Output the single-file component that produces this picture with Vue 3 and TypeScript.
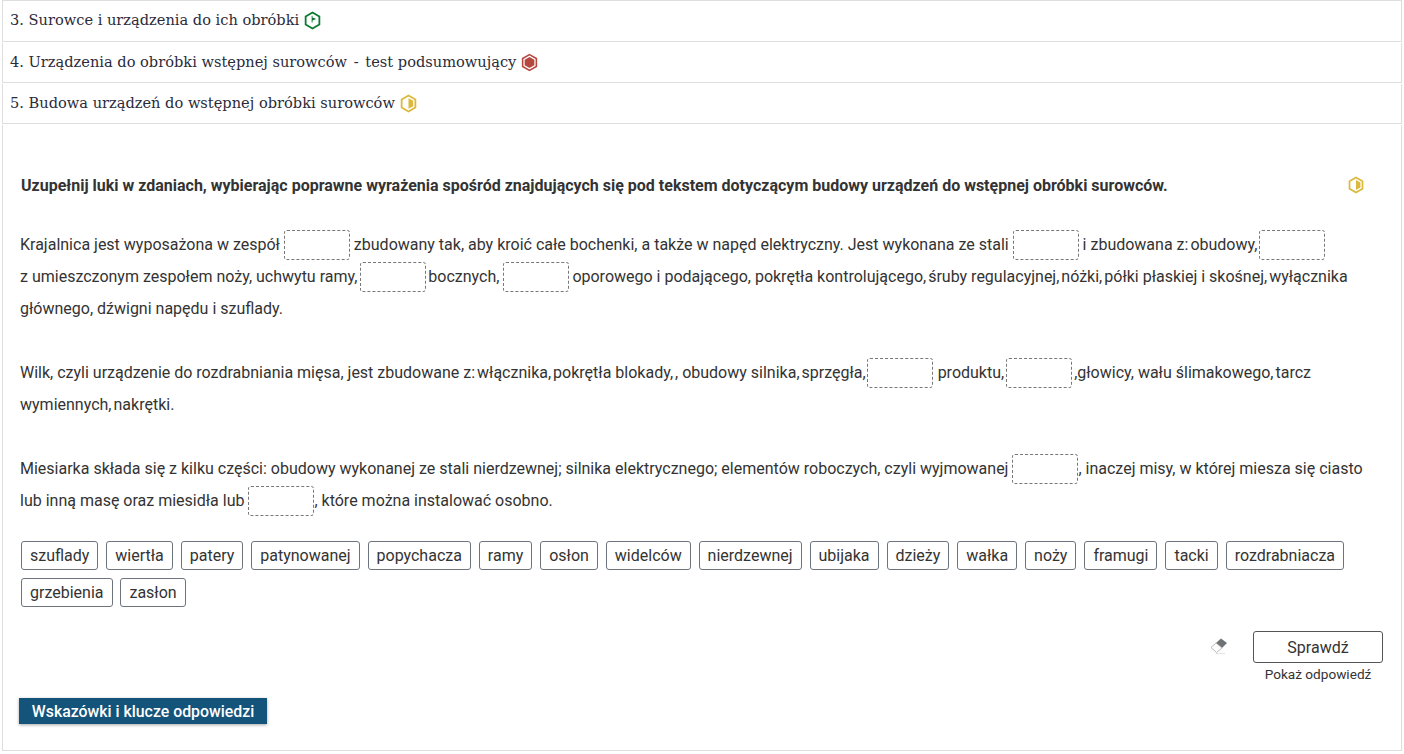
<script setup lang="ts">
const chips: string[] = ['szuflady','wiertła','patery','patynowanej','popychacza','ramy','osłon','widelców','nierdzewnej','ubijaka','dzieży','wałka','noży','framugi','tacki','rozdrabniacza','grzebienia','zasłon']
</script>

<template>
  <div class="page">
    <div class="row first"><span class="name">3. Surowce i urządzenia do ich obróbki</span>
      <svg class="hex" viewBox="0 0 18 18"><path d="M9 1.5 15.5 5.2V12.8L9 16.5 2.5 12.8V5.2Z" fill="#fff" stroke="#0a7a2f" stroke-width="1.7"/><path d="M8.2 4.6H9V6.2L12.6 7.6 9 9V11H8.2Z" fill="#0a7a2f"/></svg>
    </div>
    <div class="row"><span class="name">4. Urządzenia do obróbki wstępnej surowców <span class="dash">-</span> test podsumowujący</span>
      <svg class="hex" viewBox="0 0 18 18"><path d="M9 1.5 15.5 5.2V12.8L9 16.5 2.5 12.8V5.2Z" fill="#fff" stroke="#b5473f" stroke-width="1.5"/><path d="M9 3.8 13.6 6.4V11.6L9 14.2 4.4 11.6V6.4Z" fill="#b5473f"/></svg>
    </div>
    <div class="row"><span class="name">5. Budowa urządzeń do wstępnej obróbki surowców</span>
      <svg class="hex" viewBox="0 0 18 18"><path d="M9 1.5 15.5 5.2V12.8L9 16.5 2.5 12.8V5.2Z" fill="#fff" stroke="#dcb83c" stroke-width="1.7"/><path d="M9 4 13.4 6.5V11.5L9 14Z" fill="#dcb83c"/></svg>
    </div>
    <div class="panel">
      <div class="title">
        <strong>Uzupełnij luki w zdaniach, wybierając poprawne wyrażenia spośród znajdujących się pod tekstem dotyczącym budowy urządzeń do wstępnej obróbki surowców.</strong>
        <svg class="hex big" viewBox="0 0 18 18"><path d="M9 1.5 15.5 5.2V12.8L9 16.5 2.5 12.8V5.2Z" fill="#fff" stroke="#dcb83c" stroke-width="1.7"/><path d="M9 4 13.4 6.5V11.5L9 14Z" fill="#dcb83c"/></svg>
      </div>
      <p class="para">Krajalnica jest wyposażona w zespół <span class="gap"></span> zbudowany tak, aby kroić całe bochenki, a także w napęd elektryczny. Jest wykonana ze stali <span class="gap"></span> i zbudowana z:<i class="s"></i>obudowy,<span class="gap m2"></span> z&nbsp;umieszczonym zespołem noży, uchwytu ramy,<span class="gap m3"></span> bocznych,<span class="gap m4"></span> oporowego i podającego, pokrętła kontrolującego,<i class="s"></i>śruby regulacyjnej,<i class="s"></i>nóżki,<i class="s"></i>półki płaskiej i skośnej,<i class="s"></i>wyłącznika głównego, dźwigni napędu i szuflady.</p>
      <p class="para">Wilk, czyli urządzenie do rozdrabniania mięsa, jest zbudowane z:<i class="s"></i>włącznika,<i class="s"></i>pokrętła blokady,<i class="s"></i>, obudowy silnika,<i class="s"></i>sprzęgła,<span class="gap m1"></span> produktu,<span class="gap m5"></span>,głowicy, wału ślimakowego,<i class="s"></i>tarcz wymiennych,<i class="s"></i>nakrętki.</p>
      <p class="para">Miesiarka składa się z kilku części: obudowy wykonanej ze stali nierdzewnej; silnika elektrycznego; elementów roboczych, czyli wyjmowanej <span class="gap"></span>, inaczej misy, w której miesza się ciasto lub inną masę oraz miesidła lub <span class="gap"></span>, które można instalować osobno.</p>
      <div class="chips">
        <span v-for="c in chips" :key="c" class="chip">{{ c }}</span>
      </div>
      <div class="actions">
        <svg class="eraser" viewBox="0 0 18 16"><path d="M11 .5 17 5 12 10 6 5Z" fill="#6f7275"/><path d="M6 5 12 10 6.5 14.5 1 9.5Z" fill="#fff" stroke="#b4b0ae" stroke-width=".9"/><path d="M6 15.5H15" stroke="#e2e2e2" stroke-width="1"/></svg>
        <div class="check">
          <button class="btn" type="button">Sprawdź</button>
          <span class="show">Pokaż odpowiedź</span>
        </div>
      </div>
      <button class="hints" type="button">Wskazówki i klucze odpowiedzi</button>
    </div>
  </div>
</template>

<style>
html, body { margin: 0; background: #fff; }
</style>

<style scoped>
.page { width: 1400px; margin-left: 2px; height: 751px; box-sizing: border-box; font-family: Roboto, sans-serif; color: #333; display: flex; flex-direction: column; }
.row { height: 40px; flex: none; box-sizing: border-box; border: 1px solid #dedede; border-top: 0; margin-bottom: 1px; padding: 0 7px; display: flex; align-items: center; gap: 4px; font-family: "DejaVu Serif", serif; font-size: 14.6px; color: #2b2b3a; white-space: nowrap; }
.row.first { height: 42px; border-top: 1px solid #dedede; padding-bottom: 1px; }
.name { margin-bottom: 2px; }
.dash { margin: 0 2px; }
.hex { width: 19px; height: 19px; flex: none; }
.panel { flex: 1; border: 1px solid #dedede; border-top: 0; padding: 44px 18px 0 18px; display: flex; flex-direction: column; min-height: 0; }
.title { display: flex; justify-content: space-between; align-items: center; padding-right: 18px; height: 32px; font-size: 16px; }
.title strong { font-weight: 700; color: #333; }
.hex.big { width: 18px; height: 18px; }
.para { margin: 28px 0 0 -1px; font-size: 16px; line-height: 32px; color: #333; }
.para + .para { margin-top: 32px; }
.s { display: inline-block; width: 2px; }
.gap { display: inline-block; width: 66px; height: 30px; box-sizing: border-box; border: 1px dashed #777; border-radius: 3px; vertical-align: middle; margin-top: -2px; }
.gap.m1 { margin-left: 1px; margin-right: 1px; }
.gap.m2 { margin-left: 2px; }
.gap.m3 { margin-left: 3px; margin-right: -2px; }
.gap.m4 { margin-left: 4px; margin-right: -1px; }
.gap.m5 { margin-left: 2px; margin-right: 2px; }
.chips { display: flex; flex-wrap: wrap; gap: 8px 7.95px; margin: 24px 0 0 0; }
.chip { height: 29px; box-sizing: border-box; border: 1px solid #6c757d; border-radius: 3px; padding: 0 8px; font-size: 16px; line-height: 27px; color: #333; }
.actions { display: flex; justify-content: flex-end; align-items: flex-start; gap: 25px; margin-top: 24px; }
.eraser { width: 18px; height: 16px; margin-top: 7px; }
.check { display: flex; flex-direction: column; align-items: center; width: 130px; }
.btn { width: 130px; height: 32px; background: #fff; border: 1px solid #555; border-radius: 3px; font: 400 16px Roboto, sans-serif; color: #333; padding: 0; }
.show { font-size: 13.6px; line-height: 16px; margin-top: 3px; color: #333; white-space: nowrap; }
.hints { align-self: flex-start; width: 248px; height: 26px; margin: 16px 0 0 -2px; background: #14537a; color: #fff; border: 0; padding: 0; font: 500 15.85px Roboto, sans-serif; box-shadow: 0 1px 3px rgba(0,0,0,.35); }
</style>
